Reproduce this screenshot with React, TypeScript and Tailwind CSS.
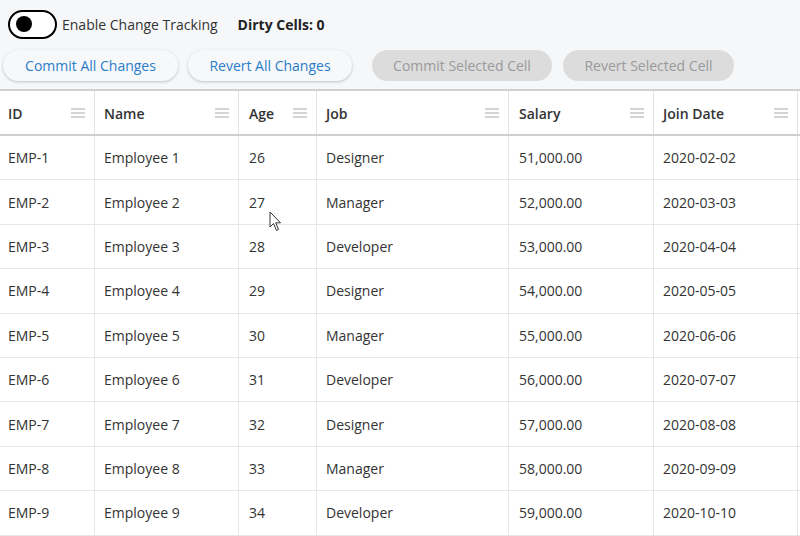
import React from 'react'

const columns = [
  { key: 'id', label: 'ID', width: 'w-[95px]', pad: 'pl-2' },
  { key: 'name', label: 'Name', width: 'w-[144px]', pad: 'pl-[9px]' },
  { key: 'age', label: 'Age', width: 'w-[78px]', pad: 'pl-[10px]' },
  { key: 'job', label: 'Job', width: 'w-[192px]', pad: 'pl-[9px]' },
  { key: 'salary', label: 'Salary', width: 'w-[145px]', pad: 'pl-[10px]' },
  { key: 'joinDate', label: 'Join Date', width: 'w-[144px]', pad: 'pl-[9px]' },
]

const jobs = ['Designer', 'Manager', 'Developer']

const rows = Array.from({ length: 9 }, (_, i) => ({
  id: `EMP-${i + 1}`,
  name: `Employee ${i + 1}`,
  age: String(26 + i),
  job: jobs[i % 3],
  salary: `${51 + i},000.00`,
  joinDate: `2020-${String(i + 2).padStart(2, '0')}-${String(i + 2).padStart(2, '0')}`,
}))

function MenuIcon() {
  return (
    <svg width="16" height="12" viewBox="0 0 16 12" className="shrink-0">
      <path d="M1 2h14M1 6h14M1 10h14" stroke="#aaaaaa" strokeWidth="1.2" />
    </svg>
  )
}

export default function App() {
  return (
    <div className="relative w-[800px] h-[536px] overflow-hidden bg-[#f6f7f9] text-[14px] text-[#333]" style={{ fontFamily: '"Open Sans", sans-serif' }}>
      {/* toolbar */}
      <div className="flex items-center h-[47px] pl-2 pt-[1px]">
        <div className="w-[49px] h-[29px] rounded-full border-2 border-black bg-white flex items-center pl-[6px]">
          <div className="w-[16px] h-[16px] rounded-full bg-black" />
        </div>
        <span className="ml-[5px] text-[#333]">Enable Change Tracking</span>
        <span className="ml-[20px] font-bold text-[#222]">Dirty Cells: 0</span>
      </div>
      <div className="flex items-start h-[42px] pl-[3px] pt-[3px]">
        <button className="h-[31px] w-[175px] rounded-full bg-[#f7f8fa] text-[#2a7dc9] shadow-[0_1px_3px_rgba(0,0,0,0.22)]">Commit All Changes</button>
        <button className="ml-[10px] h-[31px] w-[164px] rounded-full bg-[#f7f8fa] text-[#2a7dc9] shadow-[0_1px_3px_rgba(0,0,0,0.22)]">Revert All Changes</button>
        <button className="ml-[20px] h-[31px] w-[180px] rounded-full bg-[#dcdcdc] text-[#9a9a9a]">Commit Selected Cell</button>
        <button className="ml-[11px] h-[31px] w-[171px] rounded-full bg-[#dcdcdc] text-[#9a9a9a]">Revert Selected Cell</button>
      </div>

      {/* grid */}
      <div className="border-t-2 border-[#d0d0d0] bg-white w-[820px]">
        <div className="flex h-[45px] border-b-2 border-[#cfcfcf] items-center">
          {columns.map((c) => (
            <div key={c.key} className={`${c.width} ${c.pad} pr-[8px] pt-[1px] h-full flex items-center justify-between border-r border-[#e2e2e2] font-semibold text-[#333]`}>
              <span>{c.label}</span>
              <MenuIcon />
            </div>
          ))}
          <div className="flex-1 h-full" />
        </div>
        {rows.map((r) => (
          <div key={r.id} className="flex h-[44.4px] border-b border-[#e6e6e6]">
            {columns.map((c) => (
              <div key={c.key} className={`${c.width} ${c.pad} h-full flex items-center border-r border-[#e6e6e6]`}>
                {r[c.key as keyof typeof r]}
              </div>
            ))}
            <div className="flex-1 h-full" />
          </div>
        ))}
      </div>

      {/* mouse pointer */}
      <svg className="absolute left-[269px] top-[211px]" width="14" height="22" viewBox="0 0 14 22">
        <path d="M1 1 L1 16 L4.5 12.5 L7.5 19.5 L9.5 18.5 L6.7 11.8 L11.5 11.8 Z" fill="white" stroke="#333" strokeWidth="1" strokeLinejoin="round" />
      </svg>
    </div>
  )
}
